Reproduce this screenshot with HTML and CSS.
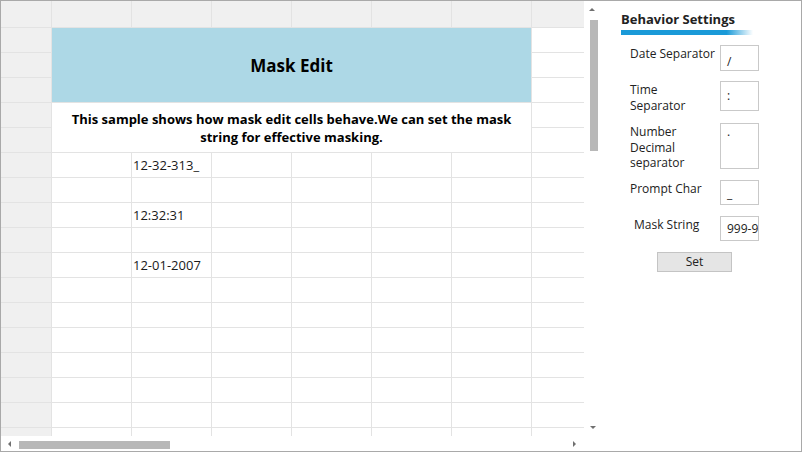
FILE: index.html
```html
<!DOCTYPE html>
<html>
<head>
<meta charset="utf-8">
<link rel="stylesheet" href="styles.css">
</head>
<body>
<div class="app">
  <div class="left">
    <div class="top">
      <div class="viewport">
        <div class="sheet">
          <div class="h"></div><div class="h"></div><div class="h"></div><div class="h"></div><div class="h"></div><div class="h"></div><div class="h"></div><div class="h"></div>
          <div class="title">Mask Edit</div>
          <div class="desc">This sample shows how mask edit cells behave.We can set the mask string for effective masking.</div>
          <div class="r"></div><div class="c"></div>
          <div class="r"></div><div class="c"></div>
          <div class="r"></div><div class="c"></div>
          <div class="r"></div><div class="c"></div>
          <div class="r"></div><div class="c"></div>
          <div class="r"></div><div class="c"></div><div class="c">12-32-313_</div><div class="c"></div><div class="c"></div><div class="c"></div><div class="c"></div><div class="c"></div>
          <div class="r"></div><div class="c"></div><div class="c"></div><div class="c"></div><div class="c"></div><div class="c"></div><div class="c"></div><div class="c"></div>
          <div class="r"></div><div class="c"></div><div class="c">12:32:31</div><div class="c"></div><div class="c"></div><div class="c"></div><div class="c"></div><div class="c"></div>
          <div class="r"></div><div class="c"></div><div class="c"></div><div class="c"></div><div class="c"></div><div class="c"></div><div class="c"></div><div class="c"></div>
          <div class="r"></div><div class="c"></div><div class="c">12-01-2007</div><div class="c"></div><div class="c"></div><div class="c"></div><div class="c"></div><div class="c"></div>
          <div class="r"></div><div class="c"></div><div class="c"></div><div class="c"></div><div class="c"></div><div class="c"></div><div class="c"></div><div class="c"></div>
          <div class="r"></div><div class="c"></div><div class="c"></div><div class="c"></div><div class="c"></div><div class="c"></div><div class="c"></div><div class="c"></div>
          <div class="r"></div><div class="c"></div><div class="c"></div><div class="c"></div><div class="c"></div><div class="c"></div><div class="c"></div><div class="c"></div>
          <div class="r"></div><div class="c"></div><div class="c"></div><div class="c"></div><div class="c"></div><div class="c"></div><div class="c"></div><div class="c"></div>
          <div class="r"></div><div class="c"></div><div class="c"></div><div class="c"></div><div class="c"></div><div class="c"></div><div class="c"></div><div class="c"></div>
          <div class="r"></div><div class="c"></div><div class="c"></div><div class="c"></div><div class="c"></div><div class="c"></div><div class="c"></div><div class="c"></div>
          <div class="r"></div><div class="c"></div><div class="c"></div><div class="c"></div><div class="c"></div><div class="c"></div><div class="c"></div><div class="c"></div>
        </div>
      </div>
      <div class="vscroll">
        <span class="arr up"></span>
        <div class="vthumb"></div>
        <span class="arr down"></span>
      </div>
    </div>
    <div class="bottom">
      <div class="hscroll">
        <span class="arr lft"></span>
        <div class="hthumb"></div>
        <span class="arr rgt"></span>
      </div>
      <div class="corner"></div>
    </div>
  </div>
  <div class="panel">
    <div class="ptitle">Behavior Settings</div>
    <div class="pbar"></div>
    <div class="form">
      <div class="row row-date">
        <div class="lbl">Date Separator</div>
        <div class="box box-date">/</div>
      </div>
      <div class="row row-time">
        <div class="lbl">Time<br>Separator</div>
        <div class="box box-time">:</div>
      </div>
      <div class="row row-num">
        <div class="lbl">Number<br>Decimal<br>separator</div>
        <div class="box box-num">.</div>
      </div>
      <div class="row row-prompt">
        <div class="lbl">Prompt Char</div>
        <div class="box box-prompt">_</div>
      </div>
      <div class="row row-mask">
        <div class="lbl lbl-mask">Mask String</div>
        <div class="box box-mask">999-9</div>
      </div>
      <div class="btnrow">
        <div class="btn">Set</div>
      </div>
    </div>
  </div>
</div>
</body>
</html>
```
FILE: styles.css
```css
* { box-sizing: border-box; }
html, body { margin: 0; padding: 0; background: #fff; }
body { font-family: "Open Sans", "Noto Sans", sans-serif; color: #1e1e1e; }

.app {
  width: 802px;
  height: 452px;
  border: 1px solid #a9a9a9;
  display: flex;
  overflow: hidden;
}

.left { width: 599px; display: flex; flex-direction: column; }
.top { height: 435px; display: flex; }
.viewport { width: 583px; height: 435px; overflow: hidden; }

.sheet {
  display: grid;
  grid-template-columns: 50px repeat(7, 79px);
  grid-template-rows: 26px repeat(17, 24px);
  gap: 1px;
  background: #e3e3e3;
  width: 610px;
}
.sheet > div { background: #fff; }
.sheet > .h, .sheet > .r { background: #f0f0f0; }
.sheet > .c {
  font-size: 13px;
  line-height: 24px;
  padding-left: 1px;
  white-space: nowrap;
  color: #1a1a1a;
}
.sheet > .title {
  grid-column: 2 / span 6;
  grid-row: 2 / span 3;
  background: #add8e6;
  display: flex;
  align-items: center;
  justify-content: center;
  font-weight: 700;
  font-size: 17px;
  color: #000;
}
.sheet > .desc {
  grid-column: 2 / span 6;
  grid-row: 5 / span 2;
  display: flex;
  align-items: center;
  justify-content: center;
  text-align: center;
  font-weight: 700;
  font-size: 13px;
  line-height: 18px;
  color: #000;
  padding: 0 14px;
}

.vscroll {
  width: 16px;
  height: 435px;
  position: relative;
  display: flex;
  flex-direction: column;
  align-items: center;
}
.vthumb { width: 8px; height: 131px; background: #b8b8b8; margin-top: 19px; margin-left: 3px; }

.bottom { height: 15px; display: flex; }
.hscroll { width: 583px; height: 15px; position: relative; }
.hthumb { position: absolute; left: 18px; top: 5px; width: 151px; height: 8px; background: #b8b8b8; }
.corner { width: 16px; }

.arr { position: absolute; width: 0; height: 0; border-style: solid; }
.arr.up { top: 7px; left: 5px; border-width: 0 3.5px 3.5px 3.5px; border-color: transparent transparent #707070 transparent; }
.arr.down { top: 425px; left: 6px; border-width: 3.5px 3.5px 0 3.5px; border-color: #707070 transparent transparent transparent; }
.arr.lft { top: 5px; left: 7px; border-width: 3.5px 3.5px 3.5px 0; border-color: transparent #707070 transparent transparent; }
.arr.rgt { top: 5px; left: 572px; border-width: 3.5px 0 3.5px 3.5px; border-color: transparent transparent transparent #707070; }

.panel { flex: 1; padding-left: 21px; padding-top: 9px; }
.ptitle { font-weight: 700; font-size: 13px; line-height: 18px; color: #222; }
.pbar {
  width: 132px;
  height: 5px;
  margin-top: 2px;
  background: linear-gradient(to right, #1a9ad8 0%, #1a9ad8 80%, rgba(26,154,216,0) 100%);
}
.form { padding-left: 9px; margin-top: 10px; font-size: 12px; line-height: 16px; color: #222; }
.row { display: flex; align-items: flex-start; overflow: visible; }
.lbl { width: 90px; padding-top: 1px; white-space: nowrap; }
.lbl-mask { padding-left: 4px; }
.box {
  width: 39px;
  border: 1px solid #c9c9c9;
  padding-left: 6px;
  overflow: hidden;
  white-space: nowrap;
  font-size: 12px;
}
.row-date { height: 26px; }
.row-time { height: 30px; margin-top: 10px; }
.row-num { height: 46px; margin-top: 12px; }
.row-prompt { height: 25px; margin-top: 11px; }
.row-mask { height: 25px; margin-top: 11px; }
.row-num .lbl { line-height: 15.5px; }
.box-date { height: 26px; padding-top: 8px; }
.box-time { height: 30px; padding-top: 6px; }
.box-num { height: 46px; padding-top: 0px; }
.box-prompt { height: 25px; padding-top: 5px; }
.box-mask { height: 25px; padding-top: 4px; }
.btnrow { margin-top: 11px; padding-left: 27px; }
.btn {
  width: 75px;
  height: 20px;
  background: #e5e5e5;
  border: 1px solid #c4c4c4;
  text-align: center;
  font-size: 12px;
  line-height: 18px;
}
```
